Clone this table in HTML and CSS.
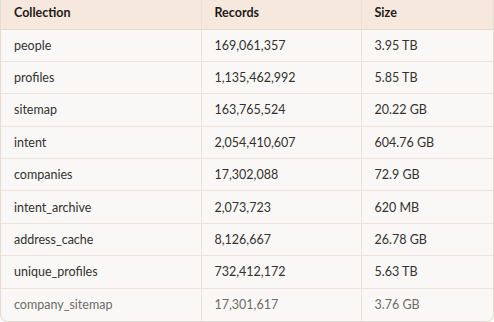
FILE: index.html
```html
<!DOCTYPE html>
<html lang="en">
<head>
  <meta charset="UTF-8">
  <title>Collections</title>
  <link rel="stylesheet" href="styles.css">
</head>
<body>
  <div class="table-wrap">
    <table class="data">
      <thead>
        <tr>
          <th class="col-name">Collection</th>
          <th class="col-records">Records</th>
          <th>Size</th>
        </tr>
      </thead>
      <tbody>
        <tr><td>people</td><td>169,061,357</td><td>3.95 TB</td></tr>
        <tr><td>profiles</td><td>1,135,462,992</td><td>5.85 TB</td></tr>
        <tr><td>sitemap</td><td>163,765,524</td><td>20.22 GB</td></tr>
        <tr><td>intent</td><td>2,054,410,607</td><td>604.76 GB</td></tr>
        <tr><td>companies</td><td>17,302,088</td><td>72.9 GB</td></tr>
        <tr><td>intent_archive</td><td>2,073,723</td><td>620 MB</td></tr>
        <tr><td>address_cache</td><td>8,126,667</td><td>26.78 GB</td></tr>
        <tr><td>unique_profiles</td><td>732,412,172</td><td>5.63 TB</td></tr>
        <tr class="faded"><td>company_sitemap</td><td>17,301,617</td><td>3.76 GB</td></tr>
      </tbody>
    </table>
  </div>
</body>
</html>
```

FILE: styles.css
```css
* {
  margin: 0;
  padding: 0;
  box-sizing: border-box;
}

body {
  font-family: Lato, "Open Sans", sans-serif;
  background: #ffffff;
  color: #33322f;
}

.table-wrap {
  width: 494px;
  border: 1px solid #e4dcd4;
  border-top: none;
  border-radius: 0 0 7px 7px;
  overflow: hidden;
  background: #f9f8f6;
}

.data {
  width: 100%;
  border-collapse: collapse;
  font-size: 12.5px;
  table-layout: fixed;
}

.data th,
.data td {
  text-align: left;
  padding: 0 13px;
  border-right: 1px solid #eee0d4;
}

.data th:last-child,
.data td:last-child {
  border-right: none;
}

.data th {
  height: 29px;
  padding-bottom: 4px;
  background: #f6e8dd;
  color: #1c1b19;
  font-weight: 700;
  border-bottom: 1px solid #ecd9ca;
}

.data td {
  height: 32.4px;
  border-bottom: 1px solid #efe2d8;
}

.data tr:last-child td {
  border-bottom: none;
}

.col-name { width: 200px; }
.col-records { width: 160px; }

.faded td {
  color: #6e6b66;
}
```
